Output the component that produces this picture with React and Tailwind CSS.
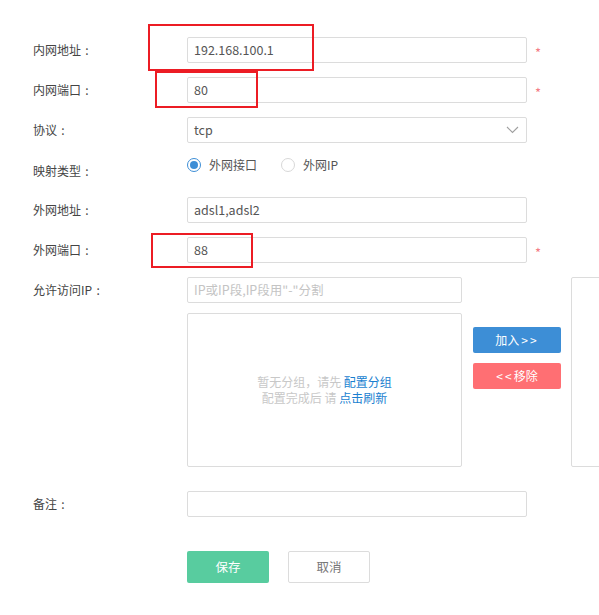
import React from "react";

const font = { fontFamily: '"Noto Sans CJK SC", "Noto Sans", sans-serif' };

function Colon() {
  return <span className="inline-block w-[12px] text-center">:</span>;
}

function Label({ children }) {
  return (
    <div className="w-[187px] shrink-0 pl-[33px] text-[12px] text-[#444]">
      {children}
      <Colon />
    </div>
  );
}

function Input({ value, placeholder, w = "w-[340px]" }) {
  return (
    <div
      className={`${w} h-[26px] shrink-0 border border-[#dcdcdc] rounded-[2px] bg-white flex items-center px-[6px] text-[12.5px] ${value ? "text-[#555]" : "text-[#c4c4c4]"}`}
    >
      {value || placeholder}
    </div>
  );
}

function Star() {
  return <span className="ml-[8px] text-[13px] text-[#f47b85] leading-none mt-[4px]">*</span>;
}

function Row({ label, children, className = "" }) {
  return (
    <div className={`flex items-center h-[26px] ${className}`}>
      <Label>{label}</Label>
      {children}
    </div>
  );
}

export default function App() {
  return (
    <div className="relative w-[599px] h-[615px] overflow-hidden bg-white" style={font}>
      <div className="flex flex-col pt-[37px]">
        <Row label="内网地址">
          <Input value="192.168.100.1" />
          <Star />
        </Row>
        <Row label="内网端口" className="mt-[14px]">
          <Input value="80" />
          <Star />
        </Row>
        <Row label="协议" className="mt-[14px]">
          <div className="w-[340px] h-[26px] border border-[#dcdcdc] rounded-[2px] flex items-center justify-between px-[6px] text-[12.5px] text-[#555]">
            <span>tcp</span>
            <svg width="13" height="8" viewBox="0 0 13 8" className="mr-[1px]">
              <path d="M1 1 L6.5 6.5 L12 1" fill="none" stroke="#a0a0a0" strokeWidth="1.1" />
            </svg>
          </div>
        </Row>
        <div className="flex items-start h-[26px] mt-[14px]">
          <div className="w-[187px] shrink-0 pl-[33px] text-[12px] text-[#444] mt-[5px]">
            映射类型
            <Colon />
          </div>
          <div className="flex items-center h-[16px] text-[12px] text-[#555]">
            <span className="w-[14px] h-[14px] rounded-full border border-[#3d8ed6] flex items-center justify-center">
              <span className="w-[8px] h-[8px] rounded-full bg-[#3d8ed6]" />
            </span>
            <span className="ml-[8px]">外网接口</span>
            <span className="ml-[24px] w-[14px] h-[14px] rounded-full border border-[#d8d8d8]" />
            <span className="ml-[8px]">外网IP</span>
          </div>
        </div>
        <Row label="外网地址" className="mt-[14px]">
          <Input value="adsl1,adsl2" />
        </Row>
        <Row label="外网端口" className="mt-[14px]">
          <Input value="88" />
          <Star />
        </Row>

        <div className="flex items-start mt-[14px]">
          <div className="w-[187px] shrink-0 pl-[33px] h-[26px] flex items-center text-[12px] text-[#444]">
            允许访问IP
            <Colon />
          </div>
          <div className="flex flex-col w-[275px] shrink-0">
            <Input placeholder={'IP或IP段,IP段用"-"分割'} w="w-[275px]" />
            <div className="mt-[10px] h-[154px] border border-[#dcdcdc] rounded-[2px] flex flex-col items-center justify-center text-[12px] leading-[16px] text-[#c8c8c8] pb-[1px]">
              <div>
                暂无分组，请先 <span className="text-[#1a7fd0]">配置分组</span>
              </div>
              <div>
                配置完成后 请 <span className="text-[#1a7fd0]">点击刷新</span>
              </div>
            </div>
          </div>
          <div className="ml-[11px] mt-[50px] flex flex-col w-[88px] shrink-0">
            <div className="h-[26px] rounded-[2px] bg-[#3d8ed6] text-white text-[12px] flex items-center justify-center">
              加入<span className="ml-[2px] tracking-[2px]">&gt;&gt;</span>
            </div>
            <div className="mt-[10px] h-[26px] rounded-[2px] bg-[#ff6f73] text-white text-[12px] flex items-center justify-center">
              <span className="tracking-[2px]">&lt;&lt;</span>移除
            </div>
          </div>
          <div className="ml-[10px] w-[200px] h-[190px] shrink-0 border border-[#dcdcdc] rounded-[2px]" />
        </div>

        <Row label="备注" className="mt-[24px]">
          <Input value="" />
        </Row>

        <div className="flex mt-[34px] pl-[187px]">
          <div className="w-[82px] h-[32px] rounded-[2px] bg-[#58cc9f] text-white text-[12.5px] flex items-center justify-center">
            保存
          </div>
          <div className="ml-[19px] w-[82px] h-[32px] rounded-[2px] border border-[#dcdcdc] text-[#777] text-[12.5px] flex items-center justify-center">
            取消
          </div>
        </div>
      </div>

      {/* annotation highlights */}
      <div className="absolute left-[148px] top-[24px] w-[166px] h-[47px] border-2 border-[#ec1c24]" />
      <div className="absolute left-[155px] top-[71px] w-[103px] h-[37px] border-2 border-[#ec1c24]" />
      <div className="absolute left-[151px] top-[233px] w-[102px] h-[35px] border-2 border-[#ec1c24]" />
    </div>
  );
}
